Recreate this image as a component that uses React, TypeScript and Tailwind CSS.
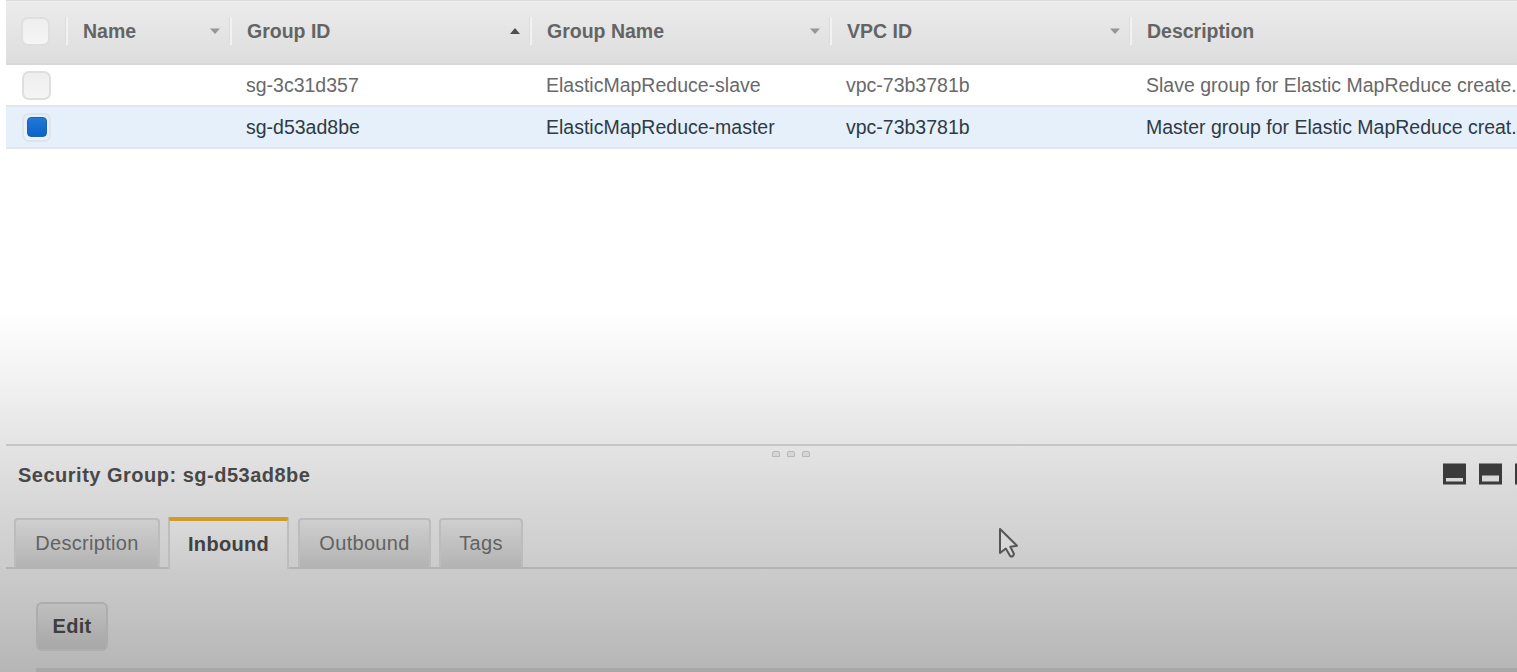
import React from "react";

type Group = { id: string; name: string; vpc: string; description: string; selected: boolean };

const groups: Group[] = [
  { id: "sg-3c31d357", name: "ElasticMapReduce-slave", vpc: "vpc-73b3781b", description: "Slave group for Elastic MapReduce create.", selected: false },
  { id: "sg-d53ad8be", name: "ElasticMapReduce-master", vpc: "vpc-73b3781b", description: "Master group for Elastic MapReduce creat.", selected: true },
];

function SortArrow({ up = false }: { up?: boolean }) {
  return (
    <svg width="12" height="8" viewBox="0 0 12 8" className="mr-[9px] shrink-0">
      {up ? <path d="M1 7 L6 1 L11 7 Z" fill="#505050" /> : <path d="M1 1.5 L11 1.5 L6 7 Z" fill="#969696" />}
    </svg>
  );
}

function HeaderCell({ label, width, sort }: { label: string; width: string; sort?: "up" | "down" }) {
  return (
    <div className={`flex h-7 shrink-0 items-center justify-between border-l-2 border-[#f2f2f2] pl-[15px] shadow-[-1px_0_0_#dcdcdc] ${width}`}>
      <span>{label}</span>
      {sort && <SortArrow up={sort === "up"} />}
    </div>
  );
}

function Checkbox({ checked = false }: { checked?: boolean }) {
  return (
    <span
      className={`flex h-[29px] w-[29px] items-center justify-center rounded-[7px] border-2 bg-linear-to-b ${
        checked ? "border-[#dce5ee] from-[#e8eef4] to-[#edf2f8]" : "border-[#dfdfdf] from-[#eeeeee] to-[#f5f5f5]"
      }`}
    >
      {checked && <span className="h-5 w-5 rounded-[4px] border border-[#1d62b4] bg-linear-to-b from-[#2079d8] to-[#0b62c9]" />}
    </span>
  );
}

function GroupRow({ group }: { group: Group }) {
  return (
    <div
      className={`ml-1.5 flex h-[42px] shrink-0 items-center whitespace-nowrap border-b-2 ${
        group.selected ? "border-[#dfe7ed] bg-[#e5f0fb] text-[#303a44]" : "border-[#e0e6eb] text-[#696969]"
      }`}
    >
      <div className="w-60 shrink-0 pl-4">
        <Checkbox checked={group.selected} />
      </div>
      <div className="w-[300px] shrink-0">{group.id}</div>
      <div className="w-[300px] shrink-0">{group.name}</div>
      <div className="w-[300px] shrink-0">{group.vpc}</div>
      <div className="shrink-0">{group.description}</div>
    </div>
  );
}

function Tab({ label, width, active = false }: { label: string; width: string; active?: boolean }) {
  return active ? (
    <button className={`-mb-0.5 h-[52px] rounded-t-[2px] border-x-2 border-t-4 border-x-[#bdbdbd] border-t-[#d2992b] bg-linear-to-b from-[#dadada] to-[#cccccc] pb-[3px] font-bold text-[#414141] ${width}`}>
      {label}
    </button>
  ) : (
    <button className={`h-[49px] rounded-t-[4px] border-2 border-b-0 border-[#bcbcbc] bg-linear-to-b from-[#cfcfcf] to-[#b3b3b3] pb-px text-[#626262] ${width}`}>
      {label}
    </button>
  );
}

function PaneIcon({ top }: { top: number }) {
  return (
    <svg width="24" height="22" viewBox="0 0 24 22" className="shrink-0">
      <rect x="0" y="0.5" width="23" height="21" fill="#3b3b3b" />
      <rect x="3" y={top} width="17" height={18.5 - top} fill="#d8d8d8" />
    </svg>
  );
}

export default function App() {
  return (
    <main className="relative flex h-[672px] w-full flex-col overflow-hidden bg-[linear-gradient(to_bottom,#ffffff_310px,#f4f4f4_370px,#e5e5e5_440px,#d8d8d8_500px,#cbcbcb_570px,#b6b6b6_672px)] font-['Liberation_Sans',sans-serif] text-[19.5px] leading-6">
      <header className="ml-1.5 flex h-[65px] shrink-0 items-center overflow-hidden border-b-2 border-t border-b-[#d8d8d8] border-t-[#dcdcdc] bg-linear-to-b from-[#ececec] to-[#dddddd] pb-0.5 font-bold text-[#646464]">
        <div className="w-[60px] shrink-0 pl-[15px]">
          <Checkbox />
        </div>
        <HeaderCell label="Name" width="w-[164px]" sort="down" />
        <HeaderCell label="Group ID" width="w-[300px]" sort="up" />
        <HeaderCell label="Group Name" width="w-[300px]" sort="down" />
        <HeaderCell label="VPC ID" width="w-[300px]" sort="down" />
        <HeaderCell label="Description" width="w-[400px]" />
      </header>

      <section className="flex h-[379px] shrink-0 flex-col">
        {groups.map((group) => (
          <GroupRow key={group.id} group={group} />
        ))}
      </section>

      <section className="flex flex-1 flex-col text-[20px] tracking-[0.3px]">
        <div className="ml-1.5 flex h-4 shrink-0 items-start justify-center gap-[7px] border-t-2 border-[#c5c5c5] pl-[59px] pt-[5px]">
          {[0, 1, 2].map((dot) => (
            <span key={dot} className="h-[6px] w-2 rounded-t-[2px] border border-[#b8b8b8] bg-[#d6d6d6]" />
          ))}
        </div>

        <div className="ml-[18px] flex h-[57px] shrink-0 justify-between overflow-hidden">
          <h1 className="pt-[3px] font-bold tracking-[0.5px] text-[#484848]">Security Group: sg-d53ad8be</h1>
          <div className="-mr-[22px] flex gap-3 pt-[3px]">
            <PaneIcon top={15} />
            <PaneIcon top={12.5} />
            <PaneIcon top={7} />
          </div>
        </div>

        <nav className="ml-1.5 flex h-[52px] shrink-0 items-end border-b-2 border-[#b3b3b3] pl-2">
          <Tab label="Description" width="w-[146px]" />
          <div className="w-2" />
          <Tab label="Inbound" width="w-[121px]" active />
          <div className="w-[9px]" />
          <Tab label="Outbound" width="w-[133px]" />
          <div className="w-2" />
          <Tab label="Tags" width="w-[84px]" />
        </nav>

        <div className="flex flex-1 flex-col justify-between pl-9 pt-[33px]">
          <button className="h-[49px] w-[72px] rounded-[6px] border-2 border-[#adadad] bg-linear-to-b from-[#bfbfbf] to-[#a7a7a7] pb-0.5 font-bold text-[#3e3e3e]">
            Edit
          </button>
          <div className="h-1 bg-[#a8a8a8]" />
        </div>
      </section>

      <svg width="22" height="32" viewBox="0 0 22 32" className="absolute left-[998px] top-[527px]">
        <path d="M2 2 L2 26 L7.8 21.5 L12.2 29 Q15 30.5 16 27 L12.3 19.8 L19 18.8 Z" fill="#d8d8d8" stroke="#555555" strokeWidth="2" strokeLinejoin="round" />
      </svg>
    </main>
  );
}
